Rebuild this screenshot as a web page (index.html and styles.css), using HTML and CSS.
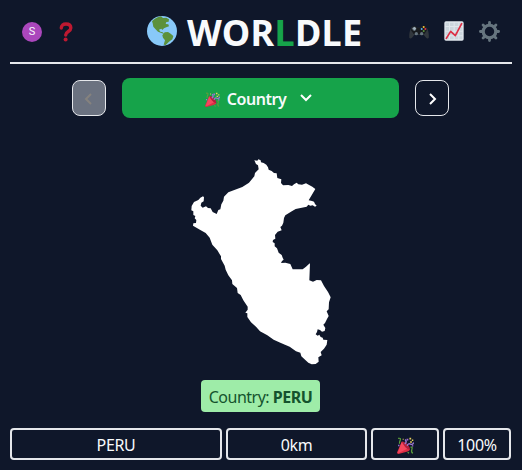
FILE: index.html
```html
<!DOCTYPE html>
<html lang="en">
<head>
<meta charset="utf-8">
<title>Worldle</title>
<link rel="stylesheet" href="styles.css">
</head>
<body>
<svg class="defs" aria-hidden="true">
  <symbol id="party" viewBox="0 0 48 48">
    <path fill="#dd2e44" d="M14 12 37 36Q33 41 25 42L4 48Q0 48 0 44Z"/>
    <path fill="#f5475e" d="M13 15 29 33 8 44 2 45Z"/>
    <path fill="#b3203c" d="M15 13Q20 12 29 20Q38 30 36 36Q30 35 23 28Q16 20 15 13Z"/>
    <path fill="none" stroke="#9a78d0" stroke-width="4" d="M22 20Q29 14 23 7M29 25Q31 17 38 20T47 15"/>
    <path fill="none" stroke="#5c9f3d" stroke-width="3.5" d="M3 4Q12 2 9 9T7 19M38 29Q45 27 42 35T45 46M30 43L34 46"/>
    <path fill="#e8cf5a" d="M35 2h5v5h-5zM42 7h4v4h-4zM37 12h5v4h-5zM16 5h3v3h-3z"/>
    <path fill="#a36bd6" d="M27 5h5v5h-5zM42 23h4v4h-4zM3 22h4v4H3z"/>
  </symbol>
</svg>
<main class="page">
  <header class="header">
    <div class="side">
      <span class="avatar">S</span>
      <svg class="help" viewBox="0 0 14 20"><path d="M2.300 6.100C2.300 3.500 4.200 2 7 2s4.800 1.500 4.800 4.100c0 3.700-5.100 3.200-5.100 7" fill="none" stroke="#be1931" stroke-width="3.400" stroke-linecap="round"/><circle cx="6.600" cy="17.500" r="2" fill="#be1931"/></svg>
    </div>
    <div class="brand">
      <svg class="globe" viewBox="0 0 90 90"><circle cx="45" cy="45" r="45" fill="#88c9f9"/><path fill="#5c913b" d="M15 16Q26 4 42 1L48 6 58 5 66 10 65 17 58 18 56 24 64 25 66 31 58 34 51 37 46 42 43 38 36 41 40 47 47 49 52 54 45 52 33 47 25 39 19 32 17 22ZM53 49 63 48 71 53 79 60 76 70 66 77 56 87 50 86 54 73 48 65 46 58Z"/></svg>
      <h1>WOR<span>L</span>DLE</h1>
    </div>
    <div class="tools">
      <svg class="pad" viewBox="0 0 60 42"><path fill="#31373d" d="M1 39C0 24 4 9 10 5L20 4 24 8H36L40 4 50 5C57 10 61 26 59 39 54 43 49 36 44 29H16C10 37 6 43 1 39Z"/><path fill="#171a1e" d="M10 5 20 4 24 8H36L40 4 50 5 54 16 46 27H14L6 16Z"/><circle cx="16" cy="11" r="6" fill="#66757f"/><path stroke="#a8b6c0" stroke-width="3" d="M16 6V16M11 11H21"/><circle cx="22" cy="26" r="5" fill="#66757f"/><circle cx="38" cy="26" r="5" fill="#66757f"/><circle cx="44" cy="6" r="3" fill="#f4bc36"/><circle cx="38" cy="12" r="3" fill="#55acee"/><circle cx="49" cy="12" r="3" fill="#dd2e44"/><circle cx="44" cy="18" r="3" fill="#5c913b"/></svg>
      <svg class="chart" viewBox="0 0 60 60"><rect x="1" y="1" width="58" height="58" rx="5" fill="#e1e8ed"/><path fill="#ccd6dd" d="M5 5h10v10H5zM18 5h11v10H18zM32 5h11v10H32zM46 5h9v10h-9zM5 18h10v11H5zM18 18h11v11H18zM32 18h11v11H32zM46 18h9v11h-9zM5 32h10v11H5zM18 32h11v11H18zM32 32h11v11H32zM46 32h9v11h-9zM5 46h10v9H5zM18 46h11v9H18zM32 46h11v9H32zM46 46h9v9h-9z"/><path fill="none" stroke="#dd2e44" stroke-width="5" stroke-linecap="round" stroke-linejoin="round" d="M7 52 20 31 34 44 53 8"/></svg>
      <svg class="gear" viewBox="0 0 60 60"><g stroke="#66757f" fill="none"><circle cx="30" cy="30" r="18" stroke-width="9"/><path stroke-width="8" stroke-linecap="round" d="M30 4V11M30 49V56M4 30H11M49 30H56M11.600 11.600 16 16M44 44 48.400 48.400M48.400 11.600 44 16M16 44 11.600 48.400"/></g></svg>
    </div>
  </header>
  <nav class="rounds">
    <button class="step disabled" aria-label="Previous"><svg viewBox="0 0 12 12"><path d="M8 1 3 6 8 11"/></svg></button>
    <button class="round"><svg class="party"><use href="#party"/></svg><span class="label">Country</span><svg class="down" viewBox="0 0 12 8"><path d="M1 1 6 6 11 1"/></svg></button>
    <button class="step" aria-label="Next"><svg viewBox="0 0 12 12"><path d="M4 1 9 6 4 11"/></svg></button>
  </nav>
  <svg class="country" viewBox="0 0 480 660"><path fill="#fff" d="M223 31 232 32 235 28 242 31 243 37 251 39 259 44 264 52 266 59 275 63 282 69 290 70 292 84 304 88 303 99 309 106 325 105 336 108 342 103 350 98 355 103 366 104 378 100 386 104 397 110 406 117 386 151 396 153 402 155 405 162 410 167 405 170 398 166 391 167 385 164 380 170 347 177 333 185 316 196 312 204 310 218 306 227 301 231 305 241 293 245 285 255 286 266 279 270 278 276 284 280 284 289 291 295 296 308 305 315 308 323 311 329 306 333 303 339 316 338 331 342 338 358 368 358 378 350 386 343 390 340 388 391 399 395 410 390 423 391 432 408 444 426 452 442 447 457 446 478 440 484 446 498 441 507 435 519 430 524 436 534 434 543 426 545 420 540 413 538 411 546 407 553 413 557 418 554 422 561 428 563 430 569 442 570 440 584 432 596 422 606 425 616 415 622 416 635 407 642 395 643 385 638 376 630 364 619 361 608 348 604 329 590 301 578 281 569 262 556 240 544 228 530 213 517 202 501 202 490 196 488 203 479 203 470 190 451 182 435 173 429 171 414 157 402 156 391 145 376 137 359 134 347 123 327 123 319 112 301 97 284 89 263 77 249 61 240 39 227 40 220 48 219 49 210 44 205 46 198 40 195 40 184 34 181 35 168 42 156 55 150 61 143 69 139 72 142 71 154 64 158 62 167 68 173 78 169 84 174 92 175 98 186 110 192 115 180 121 178 124 163 130 152 132 140 145 127 163 120 187 111 207 98 223 79 225 69 236 58 234 46 228 42Z"/></svg>
  <div class="answer"><span>Country: <b>PERU</b></span></div>
  <section class="guess">
    <div class="cell">PERU</div>
    <div class="cell">0km</div>
    <div class="cell"><svg class="party"><use href="#party"/></svg></div>
    <div class="cell">100%</div>
  </section>
</main>
</body>
</html>
```
FILE: styles.css
```css
* { box-sizing: border-box; }
body {
  margin: 0;
  background: #0f172a;
  color: #f8fafc;
  font-family: "Noto Sans", "Open Sans", sans-serif;
  font-size: 16px;
  line-height: 24px;
}
svg { display: block; flex: none; }
.defs { display: none; }
.page {
  height: 470px;
  padding: 0 10px;
  display: flex;
  flex-direction: column;
}
.header {
  height: 64px;
  border-bottom: 2px solid #e5e7eb;
  display: flex;
  align-items: center;
  justify-content: space-between;
  padding: 0 12px;
}
.side { display: flex; align-items: center; width: 125px; gap: 17px; }
.avatar {
  width: 20px;
  height: 20px;
  border-radius: 50%;
  background: #ab47bc;
  font: 11px/20px Roboto, sans-serif;
  text-align: center;
  margin-top: 2px;
}
.help { width: 14px; height: 20px; margin-top: 1px; }
.brand { display: flex; align-items: center; gap: 10px; flex: 1; }
.globe { width: 30px; height: 30px; }
h1 {
  margin: 4px 0 0;
  font-size: 36px;
  line-height: 40px;
  font-weight: 700;
  letter-spacing: 0.3px;
}
h1 span { color: #16a34a; }
.tools { display: flex; align-items: center; gap: 15px; }
.pad { width: 20px; height: 14px; margin-top: 2px; }
.chart { width: 20px; height: 20px; }
.gear { width: 21px; height: 21px; }
.rounds {
  display: flex;
  align-items: center;
  justify-content: flex-start;
  gap: 16px;
  margin-top: 14px;
  height: 40px;
  padding-left: 62px;
}
button {
  font: inherit;
  color: inherit;
  padding: 0;
  border: 0;
  display: flex;
  align-items: center;
  justify-content: center;
}
.step {
  width: 34px;
  height: 36px;
  border: 1px solid #e5e7eb;
  border-radius: 8px;
  background: transparent;
}
.step svg { width: 12px; height: 12px; margin-top: 2px; }
.step path, .down path { fill: none; stroke: #fff; stroke-width: 2; }
.disabled { background: #6b7280; }
.step.disabled path { stroke: #85827e; }
.round {
  width: 277px;
  height: 40px;
  padding-right: 4px;
  border-radius: 8px;
  background: #16a34a;
  font-weight: 600;
}
.round .party { width: 15px; height: 15px; margin-right: 7px; margin-top: 2px; }
.label { letter-spacing: -0.45px; padding-top: 2px; }
.down { width: 12px; height: 8px; margin-left: 14px; }
.party { width: 17px; height: 17px; }
.country { width: 160px; height: 220px; margin: 32px 0 0 170px; }
.answer { display: flex; margin: 10px 0 0 191px; }
.answer span {
  width: 119px;
  height: 32px;
  padding: 5px 0 3px;
  border-radius: 4px;
  background: #9eeca8;
  color: #14532d;
  text-align: center;
  white-space: nowrap;
  letter-spacing: -0.5px;
}
.guess {
  display: grid;
  grid-template-columns: 212px 141px 68px 68px;
  gap: 4px;
  margin-top: 16px;
}
.cell {
  height: 32px;
  border: 2px solid #e5e7eb;
  border-radius: 4px;
  display: flex;
  align-items: center;
  justify-content: center;
  padding-top: 2px;
  letter-spacing: -0.35px;
}
```
